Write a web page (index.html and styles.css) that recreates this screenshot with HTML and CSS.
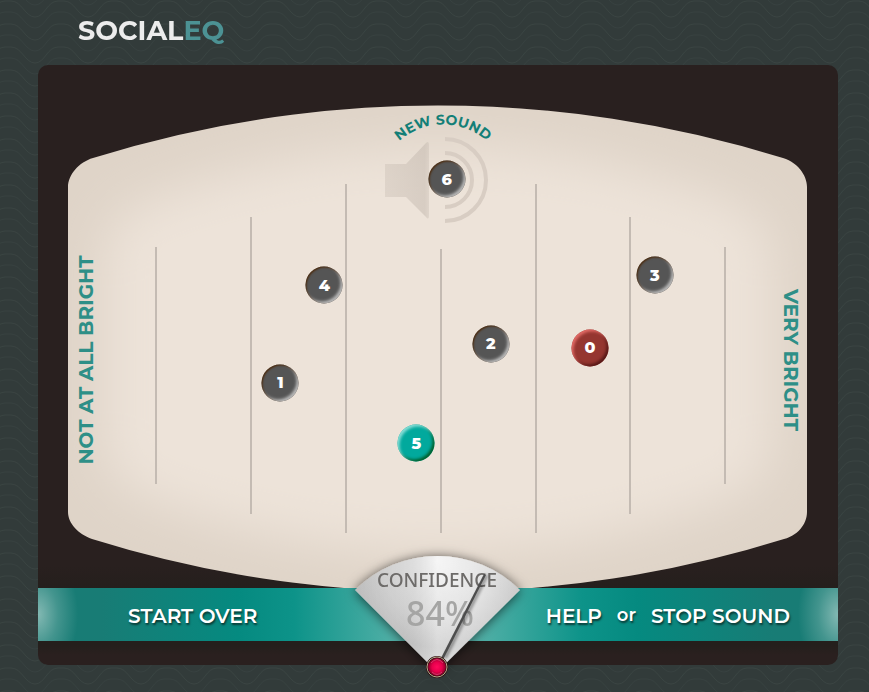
FILE: index.html
```html
<!DOCTYPE html>
<html lang="en">
<head>
<meta charset="utf-8">
<meta name="viewport" content="width=device-width, initial-scale=1">
<title>SocialEQ</title>
<link rel="stylesheet" href="styles.css">
</head>
<body>
<svg class="backdrop" aria-hidden="true">
  <defs>
    <path id="wave" d="M-18 16C-8 16 -6 0 5 0H11C22 0 25 16 35 16C45 16 47 0 58 0H64" fill="none"/>
    <pattern id="waves" width="53" height="23" patternUnits="userSpaceOnUse">
      <g stroke="#3a4442">
        <use href="#wave" y="-22"/><use href="#wave" y="1"/>
      </g>
      <g stroke="#374140">
        <use href="#wave" y="-11"/><use href="#wave" y="12"/>
      </g>
    </pattern>
  </defs>
  <rect width="100%" height="100%" fill="url(#waves)"/>
</svg>
<header class="masthead"><h1 class="logo">SOCIAL<span class="logo-accent">EQ</span></h1></header>
<main class="board">
  <section class="stage">
    <svg class="field" viewBox="0 0 800 523" role="img" aria-label="Rating area">
      <defs>
        <path id="panel" d="M30 122C30 110 41 97 55 93A1160 1160 0 0 1 745 93C759 97 769 110 769 122V447C769 459 760 470 746 474A1160 1160 0 0 1 54 474C40 469 30 458 30 447Z"/>
        <clipPath id="panelClip"><use href="#panel"/></clipPath>
        <filter id="soft" x="-20%" y="-20%" width="140%" height="140%"><feGaussianBlur stdDeviation="25"/></filter>
        <path id="titleArc" d="M350 89A66 66 0 0 1 460 89"/>
        <linearGradient id="cone" x1="0" x2="1"><stop offset="0" stop-color="#bdb2a8" stop-opacity=".3"/><stop offset=".9" stop-color="#bdb2a8" stop-opacity=".45"/><stop offset="1" stop-color="#bdb2a8" stop-opacity=".3"/></linearGradient>
      </defs>
      <use href="#panel" fill="#dfd4c8"/>
      <g clip-path="url(#panelClip)">
        <path d="M66 190C66 160 90 140 125 130C220 96 310 81 400 81S580 96 675 130C710 140 734 160 734 190V379C734 409 710 429 675 439C580 473 490 488 400 488S220 473 125 439C90 429 66 409 66 379Z" fill="#ede3d9" filter="url(#soft)"/>
      </g>
      <g stroke="#c4bbb3" stroke-width="2">
        <path d="M118 182V419M213 152V449M308 119V468M403 184V468M498 119V468M592 152V449M687 182V419"/>
      </g>
      <path d="M347 99H368L388 78Q391 75 391 80V150Q391 156 388 152L368 132H347Z" fill="url(#cone)"/>
      <g fill="none" stroke="#d8cdc3" stroke-width="4">
        <path d="M407 74A41 41 0 0 1 407 156M407 88A27 27 0 0 1 407 142"/>
      </g>
      <text class="arc-title"><textPath href="#titleArc" startOffset="50%" text-anchor="middle">NEW SOUND</textPath></text>
      <text class="side" text-anchor="middle" transform="translate(55 295) rotate(-90)">NOT AT ALL BRIGHT</text>
      <text class="side" text-anchor="middle" transform="translate(746 295) rotate(90)">VERY BRIGHT</text>
    </svg>
    <button class="chip chip-red" style="left:69%;top:54.1%">0</button>
    <button class="chip" style="left:30.3%;top:60.8%">1</button>
    <button class="chip" style="left:56.6%;top:53.3%">2</button>
    <button class="chip" style="left:77.1%;top:40.2%">3</button>
    <button class="chip" style="left:35.8%;top:42.1%">4</button>
    <button class="chip chip-teal" style="left:47.3%;top:72.3%">5</button>
    <button class="chip" style="left:51.1%;top:21.8%">6</button>
  </section>
  <nav class="toolbar">
    <button class="action">START OVER</button>
    <div class="group">
      <button class="action">HELP</button>
      <span class="or">or</span>
      <button class="action">STOP SOUND</button>
    </div>
  </nav>
  <svg class="gauge" viewBox="0 0 200 152" role="img" aria-label="Confidence 84%">
    <defs>
      <radialGradient id="metal" cx="97" cy="20" r="115" gradientUnits="userSpaceOnUse"><stop offset="0" stop-color="#f2f2f2"/><stop offset=".5" stop-color="#dadada"/><stop offset=".75" stop-color="#c6c6c6"/><stop offset="1" stop-color="#d5d5d5"/></radialGradient>
      <linearGradient id="sheen" x1="0" x2="1"><stop offset="0" stop-color="#999" stop-opacity=".2"/><stop offset=".3" stop-color="#999" stop-opacity=".15"/><stop offset=".5" stop-color="#fff" stop-opacity=".3"/><stop offset="1" stop-color="#fff" stop-opacity=".1"/></linearGradient>
      <radialGradient id="ruby"><stop offset="0" stop-color="#ff0a5c"/><stop offset=".5" stop-color="#e6004c"/><stop offset="1" stop-color="#730020"/></radialGradient>
      <filter id="cast" x="-20%" y="-20%" width="140%" height="140%"><feDropShadow dx="0" dy="1" stdDeviation="6" flood-color="#000" flood-opacity=".65"/></filter>
      <filter id="thin" x="-50%" y="-20%" width="200%" height="140%"><feGaussianBlur stdDeviation="1.5"/></filter>
    </defs>
    <g filter="url(#cast)"><path d="M97 131L15 49A117 117 0 0 1 180 49Z" fill="url(#metal)"/></g>
    <path d="M97 131L15 49A117 117 0 0 1 180 49Z" fill="url(#sheen)"/>
    <text class="gauge-label" x="97" y="46" text-anchor="middle">CONFIDENCE</text>
    <text class="gauge-value" x="100" y="85" text-anchor="middle">84%</text>
    <path d="M105 117L147 34" stroke="#000" stroke-opacity=".4" stroke-width="3" filter="url(#thin)"/>
    <path d="M101 117L144 33L146 34L104 117Z" fill="#4d4d4d"/>
    <circle cx="97" cy="126" r="10" fill="url(#ruby)" stroke="#29100f" stroke-width="2"/>
    <circle cx="97" cy="126" r="10" fill="none" stroke="#bda58d"/>
    <path d="M91 122Q97 115 103 122M92 131Q97 136 102 131" stroke="#f36a96" stroke-opacity=".55" fill="none"/>
  </svg>
</main>
</body>
</html>
```
FILE: styles.css
```css
* { box-sizing: border-box; }
body {
  margin: 0;
  min-height: 100vh;
  background: #323b3a;
  font-family: "Montserrat", Lato, sans-serif;
}
.backdrop { position: fixed; inset: 0; width: 100%; height: 100%; z-index: -1; }
.masthead { height: 65px; padding: 13px 0 0 78px; }
.logo { margin: 0; font-size: 27px; line-height: 36px; font-weight: 700; color: #ececec; }
.logo-accent { color: #4c9294; }
.board {
  position: relative;
  margin: 0 31px 0 38px;
  padding-bottom: 24px;
  border-radius: 10px;
  background: linear-gradient(#29201f calc(100% - 100px), #241f1c calc(100% - 74px), #241f1c calc(100% - 20px), #2a201f calc(100% - 10px));
}
.stage { position: relative; }
.field { display: block; width: 100%; }
.arc-title { font-size: 14px; font-weight: 700; fill: #137f77; }
.side { font-size: 20px; font-weight: 700; fill: #2e8f87; }
.chip {
  position: absolute;
  width: 37px;
  height: 37px;
  padding: 0 0 1px;
  border: 0;
  border-radius: 50%;
  transform: translate(-50%, -50%);
  font: 800 16px "Montserrat", Lato, sans-serif;
  color: #fff;
  background: #555;
  box-shadow: inset 1px 1px 2px #4d2b0d, inset -2px -2px 3px #bbb;
}
.chip-red { background: #953630; box-shadow: inset 2px 2px 3px #e26a65, inset -2px -2px 3px #571917; }
.chip-teal { background: #02a99d; box-shadow: inset 2px 2px 3px #87ddd6, inset -2px -2px 3px #00602c; }
.toolbar {
  display: flex;
  align-items: center;
  justify-content: space-between;
  height: 53px;
  padding: 2px 48px 0 90px;
  background:
    radial-gradient(ellipse 40px 64px at 0 50%, #83b9b3, #83b9b366 50%, #83b9b300),
    radial-gradient(ellipse 40px 64px at 100% 50%, #83b9b3, #83b9b366 50%, #83b9b300),
    linear-gradient(90deg, #187c75 8%, #058a80 25%, #0d9389 32%, #58b3aa 46%, #58b3aa 54%, #0d9389 68%, #058a80 75%, #187c75 92%);
}
.action, .or { font: 600 20px "Montserrat", Lato, sans-serif; color: #fff; text-shadow: 1px 2px 2px #0b3935; }
.or { padding-bottom: 2px; font-size: 18px; }
.action { padding: 0; border: 0; background: none; }
.group { display: flex; gap: 15px; align-items: center; }
.gauge { position: absolute; left: 50%; bottom: -28px; width: 200px; height: 152px; margin-left: -98px; }
.gauge-label { font: 500 19px "Noto Sans", sans-serif; fill: #6d6b69; }
.gauge-value { font: 500 34px "Noto Sans", sans-serif; fill: #a5a5a4; }
```
